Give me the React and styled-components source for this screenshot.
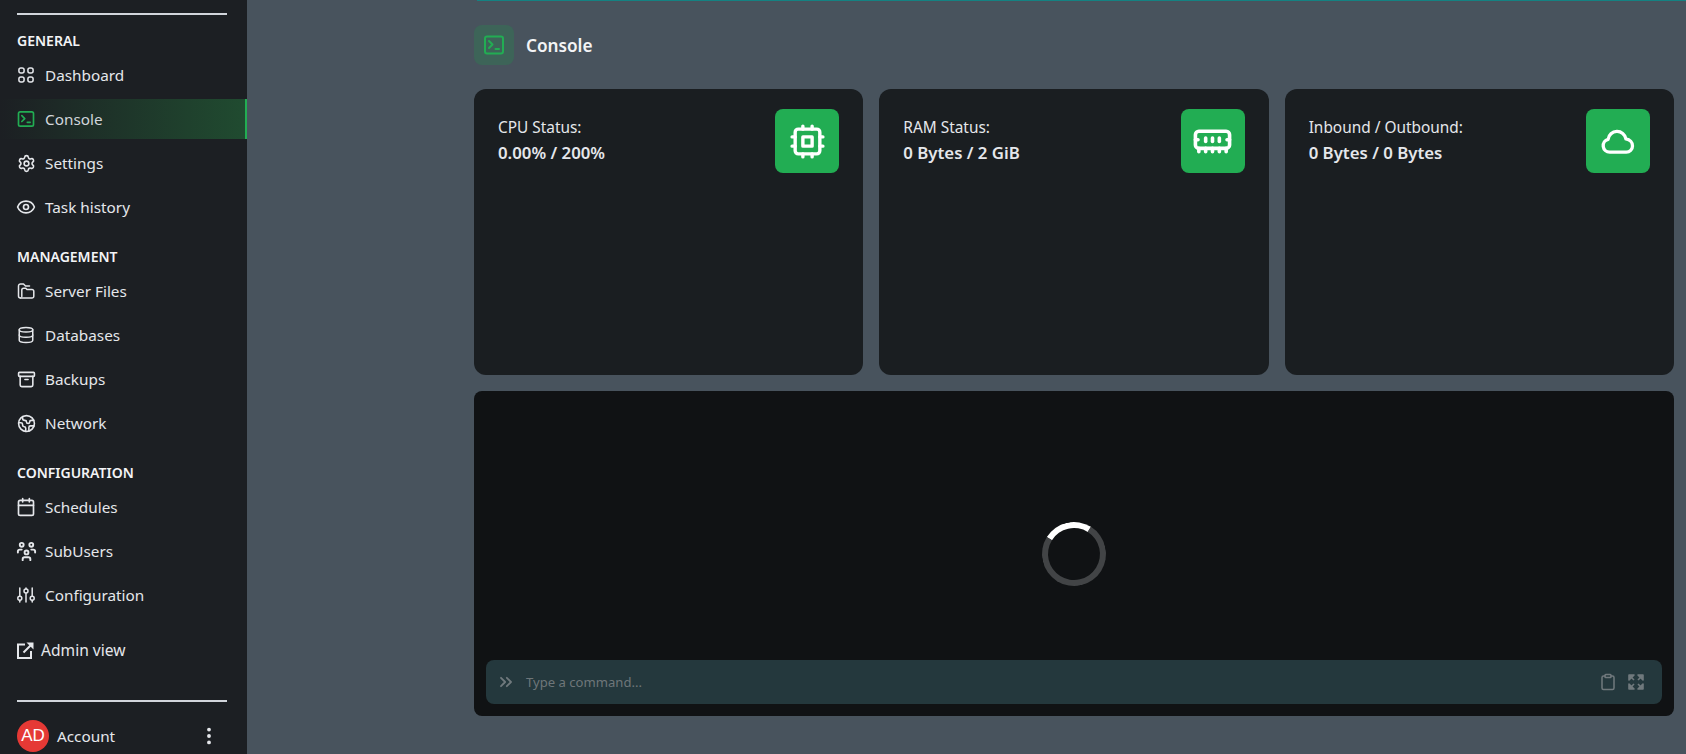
import React from 'react'
import styled, { createGlobalStyle } from 'styled-components'
import {
  Settings, Eye, Database, Archive, Earth, Calendar, EllipsisVertical, MemoryStick,
  ChevronsRight, Clipboard,
} from 'lucide-react'
import { TbUsersGroup } from 'react-icons/tb'

const GlobalStyle = createGlobalStyle`
  html, body {
    margin: 0;
    padding: 0;
    height: 100%;
    overflow: hidden;
    background: #48535d;
    font-family: "Noto Sans", "Open Sans", sans-serif;
    color: #e5e7eb;
  }
  * { box-sizing: border-box; }
`

const Page = styled.div`
  display: flex;
  height: 754px;
  overflow: hidden;
`

const Sidebar = styled.aside`
  width: 247px;
  flex: none;
  background: #1c1f23;
  display: flex;
  flex-direction: column;
  padding-top: 13px;
`

const Divider = styled.div`
  height: 2px;
  flex: none;
  margin: 0 20px 0 17px;
  background: #d1d5db;
`

const SectionTitle = styled.h3`
  margin: 16px 0 4px 17px;
  height: 20px;
  line-height: 20px;
  font-size: 14px;
  font-weight: 600;
  color: #f3f4f6;
`

const NavRow = styled.a`
  display: flex;
  align-items: center;
  gap: 9px;
  height: 40px;
  margin-bottom: 4px;
  padding-left: 16px;
  font-size: 15.3px;
  color: ${p => (p.$active ? '#d1d5db' : '#e5e7eb')};
  background: ${p => (p.$active ? 'linear-gradient(to right, #1c1f23 0%, #204b30 100%)' : 'transparent')};
  border-right: ${p => (p.$active ? '2px solid #22ad53' : 'none')};
`

const NavIcon = styled.span`
  width: 20px;
  height: 20px;
  flex: none;
  display: flex;
  align-items: center;
  justify-content: center;
  color: ${p => (p.$active ? '#22ad53' : '#e5e7eb')};
  svg { flex: none; }
`

const AdminLink = styled.a`
  display: flex;
  align-items: center;
  gap: 7px;
  height: 24px;
  margin: 19px 0 38px 17px;
  font-size: 15.6px;
  color: #e5e7eb;
`

const AccountRow = styled.div`
  display: flex;
  align-items: center;
  margin: 18px 27px 0 17px;
  height: 32px;
  flex: none;
  font-size: 15.3px;
  color: #e5e7eb;
`

const Avatar = styled.div`
  width: 32px;
  height: 32px;
  flex: none;
  border-radius: 50%;
  background: #e53935;
  color: #fff;
  display: flex;
  align-items: center;
  justify-content: center;
  font-family: "Liberation Sans", sans-serif;
  font-size: 17px;
  margin-right: 8px;
`

const AccountName = styled.span`
  flex: 1;
`

const Main = styled.main`
  flex: 1;
  min-width: 0;
  padding: 25px 12px 0 227px;
  position: relative;
`

const TopLine = styled.div`
  position: absolute;
  top: 0;
  left: 230px;
  right: 0;
  height: 1px;
  background: #148282;
`

const Header = styled.header`
  display: flex;
  align-items: center;
  gap: 12px;
  margin-bottom: 24px;
`

const HeaderIcon = styled.div`
  width: 40px;
  height: 40px;
  border-radius: 8px;
  background: #3d6458;
  color: #22ad53;
  display: flex;
  align-items: center;
  justify-content: center;
`

const Title = styled.h1`
  margin: 0;
  font-size: 17.2px;
  font-weight: 600;
  color: #f3f4f6;
`

const Cards = styled.section`
  display: grid;
  grid-template-columns: repeat(3, 1fr);
  gap: 16px;
  margin-bottom: 16px;
`

const Card = styled.div`
  height: 286px;
  border-radius: 12px;
  background: #1a1e21;
  padding: 20px 24px;
  display: flex;
  justify-content: space-between;
  align-items: flex-start;
`

const CardText = styled.div`
  padding-top: 9px;
`

const CardLabel = styled.div`
  font-size: 15.4px;
  line-height: 20px;
  color: #e5e7eb;
`

const CardValue = styled.div`
  margin-top: 5px;
  font-size: 16.8px;
  line-height: 20px;
  font-weight: 600;
  color: #e5e7eb;
`

const CardIcon = styled.div`
  width: 64px;
  height: 64px;
  border-radius: 8px;
  background: #22ad53;
  color: #fff;
  display: flex;
  align-items: center;
  justify-content: center;
`

const Terminal = styled.section`
  height: 325px;
  border-radius: 8px;
  background: #101214;
  padding: 0 12px 12px;
  display: flex;
  flex-direction: column;
`

const SpinnerArea = styled.div`
  flex: 1;
  display: flex;
  align-items: center;
  justify-content: center;
  padding-top: 57px;
`

const Spinner = styled.div`
  width: 64px;
  height: 64px;
  border-radius: 50%;
  border: 6px solid #424446;
  border-top-color: #fff;
  transform: rotate(-13deg);
`

const CommandBar = styled.div`
  height: 44px;
  flex: none;
  border-radius: 8px;
  background: #24383d;
  color: #70797d;
  display: flex;
  align-items: center;
  padding: 0 17px 0 10px;
`

const CommandInput = styled.div`
  flex: 1;
  margin-left: 10px;
  font-size: 13.1px;
  color: #6e7679;
`

const CommandIcons = styled.div`
  display: flex;
  align-items: center;
  gap: 10px;
`

// rounded 2x2 tiles, rounder than any packaged grid icon
const DashboardIcon = ({ size }) => (
  <svg width={size} height={size} viewBox="0 0 20 20" fill="none" stroke="currentColor" strokeWidth="1.5">
    <rect x="2.9" y="2.9" width="5.2" height="5.2" rx="2" />
    <rect x="11.9" y="2.9" width="5.2" height="5.2" rx="2" />
    <rect x="2.9" y="11.9" width="5.2" height="5.2" rx="2" />
    <rect x="11.9" y="11.9" width="5.2" height="5.2" rx="2" />
  </svg>
)

const TerminalIcon = ({ size }) => (
  <svg width={size} height={size} viewBox="0 0 24 24" fill="none" stroke="currentColor" strokeWidth="2" strokeLinecap="round" strokeLinejoin="round">
    <rect x="3" y="3.5" width="18" height="17" rx="2" />
    <path d="m7 8 3.5 3.5L7 15" />
    <path d="M13.5 16h3.5" />
  </svg>
)

const FoldersIcon = ({ size }) => (
  <svg width={size} height={size} viewBox="0 0 20 20" fill="none" stroke="currentColor" strokeWidth="1.5" strokeLinejoin="round" strokeLinecap="round">
    <path d="M4.5 17A2 2 0 0 1 2.5 15V5A2 2 0 0 1 4.5 3H7.5L9.5 5H13.5" />
    <path d="M4.5 17H16A1.8 1.8 0 0 0 17.8 15.2V10.3A1.8 1.8 0 0 0 16 8.5H11L9.8 7.2H7.6A1.8 1.8 0 0 0 5.8 9V15.5" />
  </svg>
)

// three uprights: knobs low, high, low
const SlidersIcon = ({ size }) => (
  <svg width={size} height={size} viewBox="0 0 20 20" fill="none" stroke="currentColor" strokeWidth="1.5" strokeLinecap="round">
    <path d="M3.8 3v8M3.8 15.5V17M10 3v.8M10 8.2V17M16.2 3v8M16.2 15.5V17" />
    <circle cx="3.8" cy="13.2" r="2" />
    <circle cx="10" cy="6" r="2" />
    <circle cx="16.2" cy="13.2" r="2" />
  </svg>
)

// square frame with a filled arrow head in the corner
const ExternalIcon = () => (
  <svg width="17" height="17" viewBox="0 0 17 17" fill="none" stroke="currentColor" strokeWidth="2">
    <path d="M8 2.5H1v13.5h13V9" />
    <path d="M6.5 10.5 15 2" />
    <path d="M9.5 0.5h7v7Z" fill="currentColor" stroke="none" />
  </svg>
)

const CpuIcon = () => (
  <svg width="37" height="37" viewBox="0 0 24 24" fill="none" stroke="currentColor" strokeWidth="2.2" strokeLinecap="round" strokeLinejoin="round">
    <rect x="4" y="4" width="16" height="16" rx="2" />
    <rect x="9" y="9" width="6" height="6" />
    <path d="M15 2v2M15 20v2M2 15h2M2 9h2M20 15h2M20 9h2M9 2v2M9 20v2" />
  </svg>
)

const RamIcon = () => <MemoryStick size={41} strokeWidth={2.1} />

const CloudIcon = () => (
  <svg width="36" height="36" viewBox="0 0 36 36" fill="none" stroke="currentColor" strokeWidth="3.3" strokeLinejoin="round">
    <path d="M9.7 29.2a6.5 6.5 0 0 1-1.6-12.8A9 9 0 0 1 25.9 15.9C30 16.5 32.5 19.5 32.5 23A6.2 6.2 0 0 1 26.3 29.2Z" />
  </svg>
)

// corners pointing outwards
const ExpandIcon = () => (
  <svg width="18" height="18" viewBox="0 0 18 18" fill="currentColor" stroke="currentColor" strokeWidth="1.6">
    <path d="M2 7V2h5ZM16 7V2h-5ZM2 11v5h5ZM16 11v5h-5Z" strokeLinejoin="round" />
    <path d="m3 3 4 4M15 3l-4 4M3 15l4-4M15 15l-4-4" />
  </svg>
)

const sections = [
  { title: 'GENERAL', items: [
    ['Dashboard', DashboardIcon, 20],
    ['Console', TerminalIcon, 20, true],
    ['Settings', Settings, 19],
    ['Task history', Eye, 20],
  ] },
  { title: 'MANAGEMENT', items: [
    ['Server Files', FoldersIcon, 20],
    ['Databases', Database, 18],
    ['Backups', Archive, 19],
    ['Network', Earth, 19],
  ] },
  { title: 'CONFIGURATION', items: [
    ['Schedules', Calendar, 20],
    ['SubUsers', TbUsersGroup, 23],
    ['Configuration', SlidersIcon, 20],
  ] },
]

const stats = [
  { label: 'CPU Status:', value: '0.00% / 200%', icon: CpuIcon },
  { label: 'RAM Status:', value: '0 Bytes / 2 GiB', icon: RamIcon },
  { label: 'Inbound / Outbound:', value: '0 Bytes / 0 Bytes', icon: CloudIcon },
]

export default function App() {
  return (
    <Page>
      <GlobalStyle />
      <Sidebar>
        <Divider />
        {sections.map(s => (
          <div key={s.title}>
            <SectionTitle>{s.title}</SectionTitle>
            {s.items.map(([name, Icon, size, active]) => (
              <NavRow key={name} $active={active}>
                <NavIcon $active={active}>
                  <Icon size={size} />
                </NavIcon>
                {name}
              </NavRow>
            ))}
          </div>
        ))}
        <AdminLink>
          <ExternalIcon />
          Admin view
        </AdminLink>
        <Divider />
        <AccountRow>
          <Avatar>AD</Avatar>
          <AccountName>Account</AccountName>
          <EllipsisVertical size={22} strokeWidth={2.2} />
        </AccountRow>
      </Sidebar>
      <Main>
        <TopLine />
        <Header>
          <HeaderIcon>
            <TerminalIcon size={24} />
          </HeaderIcon>
          <Title>Console</Title>
        </Header>
        <Cards>
          {stats.map(({ label, value, icon: Icon }) => (
            <Card key={label}>
              <CardText>
                <CardLabel>{label}</CardLabel>
                <CardValue>{value}</CardValue>
              </CardText>
              <CardIcon>
                <Icon />
              </CardIcon>
            </Card>
          ))}
        </Cards>
        <Terminal>
          <SpinnerArea>
            <Spinner />
          </SpinnerArea>
          <CommandBar>
            <ChevronsRight size={20} strokeWidth={2.2} />
            <CommandInput>Type a command...</CommandInput>
            <CommandIcons>
              <Clipboard size={18} />
              <ExpandIcon />
            </CommandIcons>
          </CommandBar>
        </Terminal>
      </Main>
    </Page>
  )
}
